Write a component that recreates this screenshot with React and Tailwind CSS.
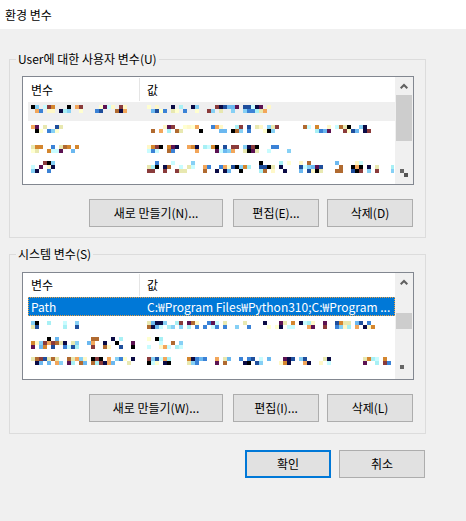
import React from 'react';

// seeded random so the blurred (mosaic) cells stay the same between renders
function makeRand(seed) {
  let a = seed;
  return () => {
    a |= 0;
    a = (a + 0x6d2b79f5) | 0;
    let t = Math.imul(a ^ (a >>> 15), 1 | a);
    t = (t + Math.imul(t ^ (t >>> 7), 61 | t)) ^ t;
    return ((t ^ (t >>> 14)) >>> 0) / 4294967296;
  };
}

const palette = [
  '#0b0b45', '#f2a65a', '#a8f0f5', '#6bb8f0', '#8a3b3b', '#5c1252', '#fff8c8', '#3b82d6',
  '#000000', '#d4862e', '#c8fcff', '#ffffd0', '#1f4e9c', '#86d0f5', '#b06a30', '#e8e8b0',
];

function Mosaic({ seed, cols, rows = 2, className = '' }) {
  const rand = makeRand(seed);
  const grid = Array.from({ length: rows }, () => []);
  let gap = 0;
  for (let j = 0; j < cols; j++) {
    if (gap === 0 && j > 1 && rand() < 0.12) gap = 1 + Math.floor(rand() * 2);
    for (let i = 0; i < rows; i++) {
      const fill = gap === 0 && rand() < (rows === 3 && i === 0 ? 0.3 : 0.6);
      grid[i].push(fill ? palette[Math.floor(rand() * palette.length)] : null);
    }
    if (gap > 0) gap--;
  }
  return (
    <div className={`flex flex-col ${className}`}>
      {grid.map((row, i) => (
        <div key={i} className="flex">
          {row.map((c, j) => (
            <span key={j} className="w-[4px] h-[4px] shrink-0" style={{ background: c || 'transparent' }} />
          ))}
        </div>
      ))}
    </div>
  );
}

function ScrollBar({ thumbClass, down }) {
  return (
    <div className="w-[18px] bg-[#f0f0f0] flex flex-col">
      <div className="h-[18px] flex items-center justify-center">
        <svg width="8" height="6" viewBox="0 0 8 6">
          <polyline points="0.7,5.3 4,2 7.3,5.3" fill="none" stroke="#606060" strokeWidth="2" />
        </svg>
      </div>
      <div className={`mx-[1px] bg-[#cdcdcd] ${thumbClass}`} />
      <div className="flex-1" />
      <div className="h-[17px]">
        <svg width="18" height="17" viewBox="0 0 18 17">
          {down === 'two' ? (
            <>
              <rect x="5" y="2" width="4" height="4" fill="#666" />
              <rect x="9" y="6" width="4" height="4" fill="#555" />
            </>
          ) : (
            <rect x="5" y="3" width="4" height="4" fill="#666" />
          )}
        </svg>
      </div>
    </div>
  );
}

function Row({ item }) {
  if (item.path) {
    return (
      <div className="h-[19px] ml-[5px] flex items-center bg-[#0078d7] text-white border border-dotted border-[#f0a040] whitespace-nowrap overflow-hidden">
        <span className="w-[118px] pl-[2px] shrink-0">Path</span>
        <span className="overflow-hidden">C:₩Program Files₩Python310;C:₩Program ...</span>
      </div>
    );
  }
  return (
    <div className={`h-[19px] ml-[5px] flex items-start border border-transparent overflow-hidden ${item.grey ? 'bg-[#efefef]' : ''}`}>
      <div className="w-[118px] pl-[2px] shrink-0">
        <Mosaic seed={item.seed} cols={item.a} rows={item.rows} className={item.mt} />
      </div>
      <Mosaic seed={item.seed + 50} cols={item.b} rows={item.rows} className={item.mt} />
    </div>
  );
}

function ListView({ heightClass, headerClass, items, thumbClass, down }) {
  return (
    <div className={`w-[392px] ${heightClass} border border-[#828790] bg-white flex overflow-hidden`}>
      <div className="w-[372px] flex flex-col">
        <div className={`${headerClass} ml-[5px] flex items-center shrink-0`}>
          <span className="w-[111px] pl-[3px]">변수</span>
          <span className="w-px self-stretch my-[1px] bg-[#e5e5e5]" />
          <span className="pl-[7px]">값</span>
        </div>
        {items.map((it, i) => (
          <Row key={i} item={it} />
        ))}
      </div>
      <ScrollBar thumbClass={thumbClass} down={down} />
    </div>
  );
}

function Btn({ children, className = '' }) {
  return (
    <button className={`h-[28px] bg-[#e1e1e1] border border-[#adadad] flex items-center justify-center ${className}`}>
      {children}
    </button>
  );
}

const userRows = [
  { seed: 11, a: 24, b: 31, rows: 2, mt: 'mt-[2px]', grey: true },
  { seed: 23, a: 8, b: 58, rows: 2, mt: 'mt-[3px]' },
  { seed: 37, a: 12, b: 36, rows: 2, mt: 'mt-[4px]' },
  { seed: 41, a: 6, b: 62, rows: 3, mt: 'mt-[1px]' },
];

const systemRows = [
  { path: true },
  { seed: 53, a: 12, b: 57, rows: 2, mt: 'mt-[4px]' },
  { seed: 67, a: 26, b: 10, rows: 3, mt: 'mt-[1px]' },
  { seed: 79, a: 26, b: 62, rows: 2, mt: 'mt-[2px]' },
];

export default function App() {
  return (
    <div className="w-[466px] h-[521px] overflow-hidden bg-[#f0f0f0] text-[12px] leading-[16px] text-black font-['Noto_Sans_CJK_KR','Liberation_Sans',sans-serif]">
      <div className="h-[29px] bg-white flex items-center pl-[5px]">환경 변수</div>

      <div className="ml-[9px] w-[417px] flex flex-col">
        {/* user variables */}
        <fieldset className="mt-[22px] border border-[#dcdcdc] pl-[6px] pr-[11px] pt-[9px] pb-[10px]">
          <legend className="px-[2px] leading-[16px]">User에 대한 사용자 변수(U)</legend>
          <div className="pl-[6px]">
            <ListView
              heightClass="h-[109px]"
              headerClass="h-[25px]"
              items={userRows}
              thumbClass="h-[46px]"
              down="two"
            />
            <div className="mt-[14px] flex">
              <Btn className="ml-[67px] w-[134px]">새로 만들기(N)...</Btn>
              <Btn className="ml-[10px] w-[86px]">편집(E)...</Btn>
              <Btn className="ml-[8px] w-[86px]">삭제(D)</Btn>
            </div>
          </div>
        </fieldset>

        {/* system variables */}
        <fieldset className="mt-[8px] border border-[#dcdcdc] pl-[6px] pr-[11px] pt-[10px] pb-[11px]">
          <legend className="px-[2px] leading-[16px]">시스템 변수(S)</legend>
          <div className="pl-[6px]">
            <ListView
              heightClass="h-[108px]"
              headerClass="h-[24px]"
              items={systemRows}
              thumbClass="mt-[22px] h-[16px]"
              down="one"
            />
            <div className="mt-[14px] flex">
              <Btn className="ml-[67px] w-[134px]">새로 만들기(W)...</Btn>
              <Btn className="ml-[10px] w-[86px]">편집(I)...</Btn>
              <Btn className="ml-[8px] w-[86px]">삭제(L)</Btn>
            </div>
          </div>
        </fieldset>

        <div className="mt-[16px] flex">
          <button className="ml-[236px] w-[86px] h-[28px] bg-[#e1e1e1] border-2 border-[#0078d7] flex items-center justify-center">
            확인
          </button>
          <Btn className="ml-[8px] w-[86px]">취소</Btn>
        </div>
      </div>
    </div>
  );
}
